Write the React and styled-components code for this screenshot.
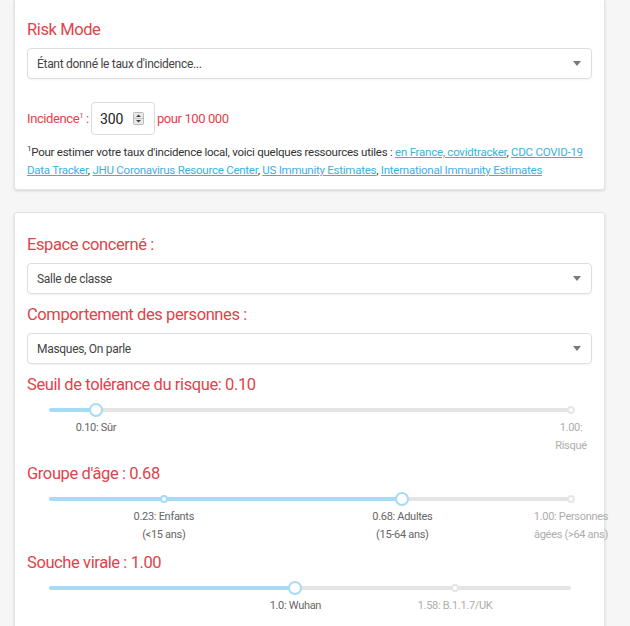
import React from 'react';
import styled, { createGlobalStyle } from 'styled-components';

const FONT = '"Roboto", "Liberation Sans", sans-serif';

const GlobalStyle = createGlobalStyle`
  * { box-sizing: border-box; }
  body {
    margin: 0;
    background: #f6f6f6;
    font-family: ${FONT};
  }
`;

const Page = styled.div`
  width: 605px;
  padding-left: 14px;
  display: flex;
  flex-direction: column;
  gap: 22px;
`;

const Card = styled.section`
  background: #fff;
  border: 1px solid #e3e3e3;
  border-top: ${p => (p.$cut ? 'none' : '1px solid #e3e3e3')};
  border-radius: ${p => (p.$cut ? '0 0 3px 3px' : '3px')};
  box-shadow: 0 1px 3px rgba(0, 0, 0, 0.13);
  padding: ${p => (p.$cut ? '19px 12px 10px' : '21px 12px 0')};
  min-height: ${p => (p.$cut ? 'auto' : '430px')};
`;

const Title = styled.h2`
  margin: 0 0 7px;
  font-family: ${FONT};
  font-weight: 400;
  font-size: 16.5px;
  letter-spacing: -0.4px;
  line-height: 22px;
  color: #e0434b;
`;

const Select = styled.div`
  height: 31px;
  margin-bottom: ${p => p.$mb || 0}px;
  padding: 0 10px 0 9px;
  display: flex;
  align-items: center;
  justify-content: space-between;
  border: 1px solid #dedede;
  border-radius: 4px;
  box-shadow: 0 1px 2px rgba(0, 0, 0, 0.05);
  font-size: 12px;
  letter-spacing: -0.3px;
  color: #444;
`;

const Caret = styled.span`
  width: 0;
  height: 0;
  border-left: 4px solid transparent;
  border-right: 4px solid transparent;
  border-top: 5px solid #7a7a7a;
`;

const IncidenceRow = styled.div`
  margin-top: 23px;
  display: flex;
  align-items: center;
  gap: 2px;
  font-size: 13px;
  letter-spacing: -0.4px;
  color: #e0434b;
`;

const Sup = styled.sup`
  font-size: 8px;
  line-height: 0;
`;

const NumberBox = styled.div`
  width: 64px;
  height: 33px;
  padding: 0 10px 0 8px;
  display: flex;
  align-items: center;
  justify-content: space-between;
  border: 1px solid #dcdcdc;
  border-radius: 4px;
  font-size: 14px;
  letter-spacing: 0;
  color: #222;
`;

const Footnote = styled.p`
  margin: 8px 0 0;
  font-size: 11.5px;
  letter-spacing: -0.25px;
  line-height: 18px;
  color: #333;
`;

const Link = styled.a`
  color: #38b3e0;
  text-decoration: underline;
`;

const SliderArea = styled.div`
  position: relative;
  height: 14px;
  margin: 4px 21px 0 22px;
`;

const Rail = styled.div`
  position: absolute;
  left: 0;
  right: 0;
  top: 5px;
  height: 4px;
  border-radius: 2px;
  background: #e4e4e4;
`;

const Track = styled.div`
  position: absolute;
  left: 0;
  top: 5px;
  height: 4px;
  border-radius: 2px;
  background: #a6dbf5;
`;

const Dot = styled.span`
  position: absolute;
  top: 3px;
  width: 8px;
  height: 8px;
  margin-left: -4px;
  border-radius: 50%;
  background: #fff;
  border: 2px solid ${p => (p.$active ? '#a6dbf5' : '#e6e6e6')};
`;

const Handle = styled.span`
  position: absolute;
  top: 0;
  width: 14px;
  height: 14px;
  margin-left: -7px;
  border-radius: 50%;
  background: #fff;
  border: 2px solid #a6dbf5;
`;

const Marks = styled.div`
  position: relative;
  height: ${p => p.$lines * 18}px;
  margin: 2px 21px 8px 22px;
`;

const MarkLabel = styled.span`
  position: absolute;
  top: 0;
  transform: translateX(-50%);
  white-space: nowrap;
  text-align: center;
  font-size: 11px;
  letter-spacing: -0.3px;
  line-height: 18px;
  color: ${p => (p.$active ? '#666' : '#adadad')};
`;

function Spinner() {
  return (
    <svg width="11" height="13" viewBox="0 0 11 13">
      <rect x="0.5" y="0.5" width="10" height="12" rx="1" fill="#e9e9e9" stroke="#b9b9b9" />
      <line x1="1" y1="6.5" x2="10" y2="6.5" stroke="#c4c4c4" />
      <path d="M3 5 L5.5 2.5 L8 5 Z" fill="#444" />
      <path d="M3 8 L5.5 10.5 L8 8 Z" fill="#444" />
    </svg>
  );
}

function Slider({ title, value, marks, lines }) {
  return (
    <>
      <Title>{title}</Title>
      <SliderArea>
        <Rail />
        <Track style={{ width: `${value}%` }} />
        {marks.filter(m => m.dot).map(m => (
          <Dot key={m.at} $active={m.at <= value} style={{ left: `${m.at}%` }} />
        ))}
        <Handle style={{ left: `${value}%` }} />
      </SliderArea>
      <Marks $lines={lines}>
        {marks.map(m => (
          <MarkLabel key={m.at} $active={m.at <= value} style={{ left: `${m.at}%` }}>
            {m.label.map((l, i) => (
              <React.Fragment key={i}>
                {i > 0 && <br />}
                {l}
              </React.Fragment>
            ))}
          </MarkLabel>
        ))}
      </Marks>
    </>
  );
}

const sliders = [
  {
    title: 'Seuil de tolérance du risque: 0.10',
    value: 9.0,
    lines: 2,
    marks: [
      { at: 9.0, label: ['0.10: Sûr'], dot: false },
      { at: 100, label: ['1.00:', 'Risqué'], dot: true },
    ],
  },
  {
    title: "Groupe d'âge : 0.68",
    value: 67.7,
    lines: 2,
    marks: [
      { at: 22.0, label: ['0.23: Enfants', '(<15 ans)'], dot: true },
      { at: 67.7, label: ['0.68: Adultes', '(15-64 ans)'], dot: false },
      { at: 100, label: ['1.00: Personnes', 'âgées (>64 ans)'], dot: true },
    ],
  },
  {
    title: 'Souche virale : 1.00',
    value: 47.2,
    lines: 1,
    marks: [
      { at: 47.2, label: ['1.0: Wuhan'], dot: false },
      { at: 77.8, label: ['1.58: B.1.1.7/UK'], dot: true },
    ],
  },
];

export default function App() {
  return (
    <>
      <GlobalStyle />
      <Page>
        <Card $cut>
          <Title>Risk Mode</Title>
          <Select>
            <span>Étant donné le taux d'incidence...</span>
            <Caret />
          </Select>
          <IncidenceRow>
            <span>
              Incidence<Sup>1</Sup> :
            </span>
            <NumberBox>
              <span>300</span>
              <Spinner />
            </NumberBox>
            <span>pour 100 000</span>
          </IncidenceRow>
          <Footnote>
            <Sup>1</Sup>Pour estimer votre taux d'incidence local, voici quelques ressources utiles :{' '}
            <Link href="#">en France, covidtracker</Link>, <Link href="#">CDC COVID-19 Data Tracker</Link>,{' '}
            <Link href="#">JHU Coronavirus Resource Center</Link>, <Link href="#">US Immunity Estimates</Link>,{' '}
            <Link href="#">International Immunity Estimates</Link>
          </Footnote>
        </Card>

        <Card>
          <Title>Espace concerné :</Title>
          <Select $mb={10}>
            <span>Salle de classe</span>
            <Caret />
          </Select>
          <Title>Comportement des personnes :</Title>
          <Select $mb={10}>
            <span>Masques, On parle</span>
            <Caret />
          </Select>
          {sliders.map(s => (
            <Slider key={s.title} {...s} />
          ))}
        </Card>
      </Page>
    </>
  );
}
